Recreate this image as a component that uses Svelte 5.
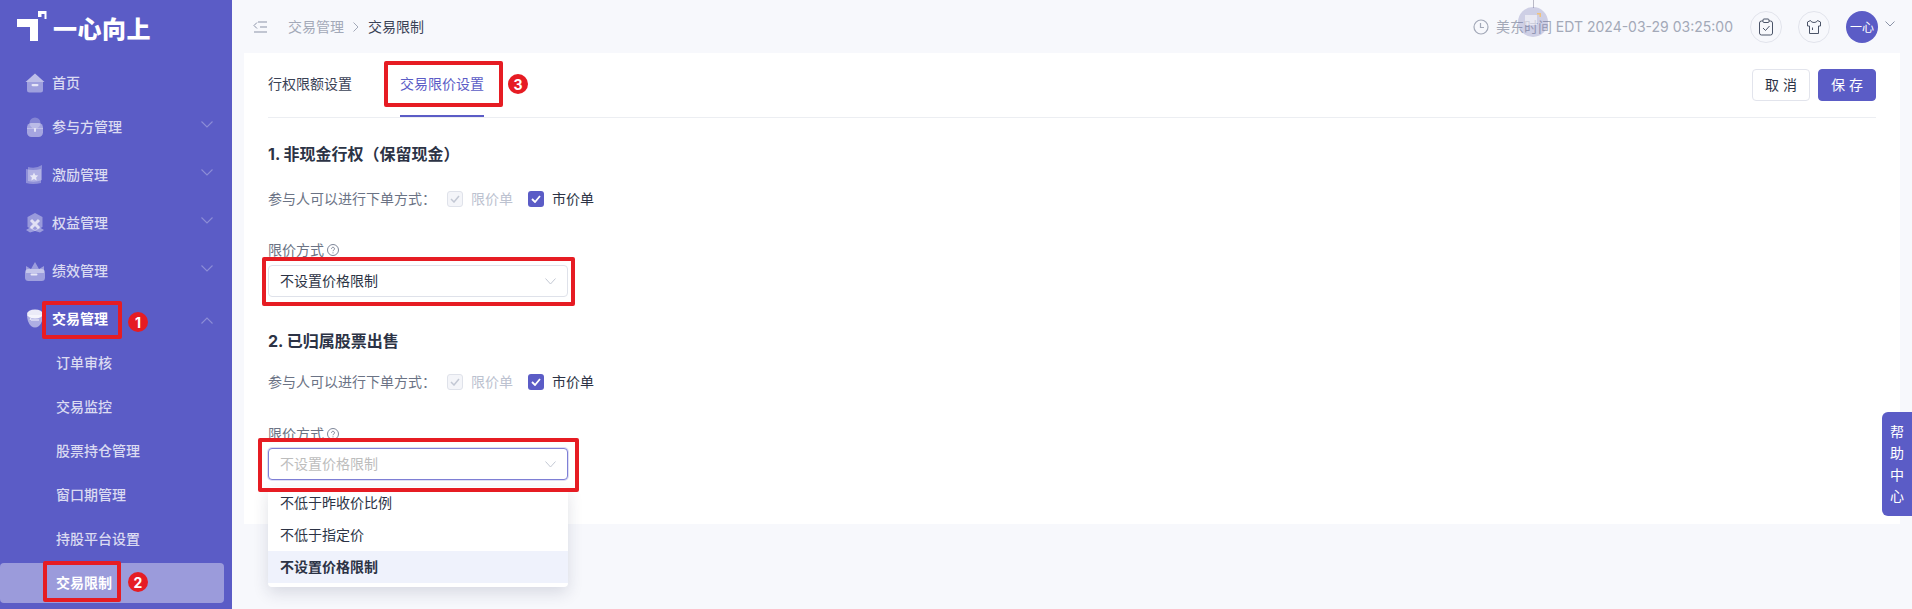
<script>
const menu = [
    { label: '首页', icon: 'home' },
    { label: '参与方管理', icon: 'bag', arrow: true },
    { label: '激励管理', icon: 'flag', arrow: true },
    { label: '权益管理', icon: 'shield', arrow: true },
    { label: '绩效管理', icon: 'crown', arrow: true },
    { label: '交易管理', icon: 'cup', arrow: true, open: true }
];
const subs = ['订单审核', '交易监控', '股票持仓管理', '窗口期管理', '持股平台设置', '交易限制'];
const sections = [
    { title: '1. 非现金行权（保留现金）', focus: false },
    { title: '2. 已归属股票出售', focus: true }
];
const options = ['不低于昨收价比例', '不低于指定价', '不设置价格限制'];
const boxes = [
    { x: 42, y: 301, w: 80, h: 38 },
    { x: 43, y: 561, w: 78, h: 41 },
    { x: 384, y: 61, w: 119, h: 46 },
    { x: 262, y: 257, w: 313, h: 49 },
    { x: 258, y: 438, w: 321, h: 54 }
];
const badges = [
    { n: 1, x: 138, y: 322 },
    { n: 2, x: 138, y: 582 },
    { n: 3, x: 518, y: 84 }
];
</script>

<div class="layout">
    <aside class="sidebar">
        <div class="logo">
            <svg width="31" height="32" viewBox="0 0 31 32">
                <path d="M1 9h21v22h-8V17H1z" fill="#fff"/>
                <path d="M22 1h8.500v8h-2V4h-3v3h-3.500z" fill="#fff"/>
            </svg>
            <span class="logo-text">一心向上</span>
        </div>
        <nav class="menu">
            {#each menu as item}
                <div class="item" class:open={item.open}>
                    <svg class="icon" width="20" height="20" viewBox="0 0 20 20">
                        {#if item.icon === 'home'}
                            <path d="M10 .5l9.500 8.500H.5z" fill="#fff" fill-opacity=".6"/>
                            <path d="M2 9h16v8a2.500 2.500 0 0 1-2.500 2.500h-11A2.500 2.500 0 0 1 2 17z" fill="#fff" fill-opacity=".42"/>
                            <rect x="6.500" y="11" width="7" height="2.200" rx="1.100" fill="#fff" fill-opacity=".75"/>
                        {:else if item.icon === 'bag'}
                            <circle cx="10" cy="6" r="5.500" fill="#fff" fill-opacity=".25"/>
                            <rect x="2" y="6" width="16" height="14" rx="4.500" fill="#fff" fill-opacity=".45"/>
                            <path d="M2 11.500h16" stroke="#fff" stroke-opacity=".3"/>
                            <rect x="9" y="11" width="2" height="4" rx="1" fill="#fff" fill-opacity=".7"/>
                        {:else if item.icon === 'flag'}
                            <path d="M3 2q8 2 14-2v15q-7 3-14 1z" fill="#fff" fill-opacity=".3"/>
                            <path d="M1 4q7 2 15 0v14q-8 2-15 0z" fill="#fff" fill-opacity=".32"/>
                            <path d="M9 7.500l1.300 2.800 3 .3-2.200 2 .6 2.900L9 14l-2.700 1.500.6-2.900-2.200-2 3-.3z" fill="#fff" fill-opacity=".7"/>
                        {:else if item.icon === 'shield'}
                            <path d="M10 0l7.500 4v10L10 18l-7.500-4V4z" fill="#fff" fill-opacity=".38"/>
                            <path d="M6 7l8 8M14 7l-8 8" stroke="#fff" stroke-opacity=".7" stroke-width="3"/>
                            <path d="M1 17l5-3 4 3 4-3 5 3-4 2.500-5-1.500-5 1.500z" fill="#fff" fill-opacity=".4"/>
                        {:else if item.icon === 'crown'}
                            <path d="M1 5l5 3 4-7 4 7 5-3v7H1z" fill="#fff" fill-opacity=".4"/>
                            <rect x="0" y="8" width="20" height="12" rx="3.500" fill="#fff" fill-opacity=".42"/>
                            <rect x="5.500" y="12.500" width="7" height="2" rx="1" fill="#fff" fill-opacity=".75"/>
                        {:else}
                            <path d="M2 6q0 7 4 11 4 3 8 0 4-4 4-11z" fill="#fff" fill-opacity=".5"/>
                            <ellipse cx="10" cy="5" rx="8" ry="4.500" fill="#fff" fill-opacity=".88"/>
                            <path d="M6 11h8M6 9l-1 2" stroke="#fff" stroke-opacity=".9"/>
                        {/if}
                    </svg>
                    <span>{item.label}</span>
                    {#if item.arrow}
                        <svg class="arrow" width="12" height="7" viewBox="0 0 12 7">
                            <path d={item.open ? 'M.5 6.500L6 1l5.500 5.500' : 'M.5.5L6 6l5.500-5.500'} fill="none" stroke="#fff" stroke-opacity=".3" stroke-width="1.100"/>
                        </svg>
                    {/if}
                </div>
            {/each}
            {#each subs as sub, i}
                <div class="sub" class:active={i === subs.length - 1}>{sub}</div>
            {/each}
        </nav>
    </aside>

    <main class="main">
        <header class="topbar">
            <svg class="collapse" width="15" height="12" viewBox="0 0 15 12">
                <path d="M5 1h9M7 6h7M1 11h13M4 1.500L1 4.500l3 3" fill="none" stroke="#8b93a7" stroke-width="1"/>
            </svg>
            <span class="crumb">交易管理</span>
            <svg class="crumb-sep" width="6" height="10" viewBox="0 0 6 10">
                <path d="M.5.5L5 5 .5 9.500" fill="none" stroke="#a3a9b8" stroke-width="1"/>
            </svg>
            <span class="crumb current">交易限制</span>

            <div class="top-right">
                <svg width="16" height="16" viewBox="0 0 16 16">
                    <circle cx="8" cy="8" r="7" fill="none" stroke="#a3a9b8" stroke-width="1.200"/>
                    <path d="M7.500 4v4.500H11" fill="none" stroke="#a3a9b8" stroke-width="1.200"/>
                </svg>
                <span class="time">美东时间 EDT 2024-03-29 03:25:00</span>
                <button class="round first">
                    <svg width="16" height="18" viewBox="0 0 16 18">
                        <rect x="1.500" y="3" width="13" height="14" rx="2" fill="none" stroke="#4b5468"/>
                        <rect x="5" y="1" width="6" height="3.500" rx="1" fill="#f7f8fc" stroke="#4b5468"/>
                        <path d="M5 10l2.500 2.500L11.500 8" fill="none" stroke="#4b5468"/>
                    </svg>
                </button>
                <button class="round">
                    <svg width="16" height="16" viewBox="0 0 16 16">
                        <path d="M4.500 1.500L1.500 3v4h2v7.500h9V7h2V3l-3-1.500q-.5 2-3.500 2t-3.500-2z" fill="none" stroke="#4b5468"/>
                        <path d="M6.500 8.500v2.500" stroke="#4b5468"/>
                    </svg>
                </button>
                <span class="avatar">一心</span>
                <svg class="avatar-arrow" width="10" height="6" viewBox="0 0 10 6">
                    <path d="M.5.5L5 5 9.500.5" fill="none" stroke="#8b93a7" stroke-width="1"/>
                </svg>
            </div>
        </header>

        <section class="card">
            <div class="tabs">
                <span class="tab">行权限额设置</span>
                <span class="tab selected">交易限价设置</span>
                <div class="actions">
                    <button class="btn">取 消</button>
                    <button class="btn primary">保 存</button>
                </div>
            </div>

            {#each sections as section}
                <div class="section" class:focus={section.focus}>
                    <h3>{section.title}</h3>
                    <div class="order-row">
                        <span class="order-label">参与人可以进行下单方式：</span>
                        <span class="check disabled">
                            <svg width="10" height="8" viewBox="0 0 10 8"><path d="M1 4l3 3 5-6" fill="none" stroke="#c3c8d4" stroke-width="1.500"/></svg>
                        </span>
                        <span class="check-text muted">限价单</span>
                        <span class="check on">
                            <svg width="10" height="8" viewBox="0 0 10 8"><path d="M1 4l3 3 5-6" fill="none" stroke="#fff" stroke-width="1.800"/></svg>
                        </span>
                        <span class="check-text">市价单</span>
                    </div>
                    <div class="field-label">
                        <span>限价方式</span>
                        <svg width="12" height="12" viewBox="0 0 12 12">
                            <circle cx="6" cy="6" r="5.500" fill="none" stroke="#7d8598" stroke-width="1"/>
                            <path d="M4.500 4.700a1.500 1.500 0 1 1 2.200 1.400c-.5.300-.7.600-.7 1.100" fill="none" stroke="#7d8598" stroke-width="1"/>
                            <circle cx="6" cy="8.800" r=".6" fill="#7d8598"/>
                        </svg>
                    </div>
                    <div class="select" class:focused={section.focus}>
                        <span class="select-text">不设置价格限制</span>
                        <svg width="11" height="7" viewBox="0 0 11 7">
                            <path d="M.5.5L5.500 6l5-5.500" fill="none" stroke="#c3c8d4" stroke-width="1"/>
                        </svg>
                        {#if section.focus}
                            <ul class="dropdown">
                                {#each options as opt, i}
                                    <li class:picked={i === options.length - 1}>{opt}</li>
                                {/each}
                            </ul>
                        {/if}
                    </div>
                </div>
            {/each}
        </section>
    </main>

    <div class="help">帮助中心</div>

    <div class="drag-ghost">
        <span class="drag-line"></span>
        <span class="drag-dot"></span>
        <svg class="drag-icon" width="16" height="12" viewBox="0 0 16 12">
            <rect x="0" y="2" width="12" height="10" fill="#fff" fill-opacity=".55"/>
            <path d="M12 0h4v4h-1.500V1.500H12z" fill="#f1c27a"/>
        </svg>
    </div>

    {#each boxes as b}
        <div class="mark" style="left:{b.x}px;top:{b.y}px;width:{b.w}px;height:{b.h}px"></div>
    {/each}
    {#each badges as b}
        <span class="badge" style="left:{b.x - 10}px;top:{b.y - 10}px">{b.n}</span>
    {/each}
</div>

<style>
:global(body) {
    margin: 0;
    background: #f7f8fc;
    font-family: Inter, "Noto Sans CJK SC", sans-serif;
}

.layout {
    position: relative;
    display: flex;
    width: 1912px;
    height: 609px;
    overflow: hidden;
    background: #f7f8fc;
}

.sidebar {
    flex: none;
    width: 232px;
    height: 609px;
    background: #5b5cc6;
    overflow: hidden;
}

.logo {
    display: flex;
    align-items: flex-start;
    height: 63px;
    padding: 10px 0 0 16px;
    box-sizing: border-box;
    gap: 6px;
}

.logo-text {
    margin-top: 5px;
    color: #fff;
    font-size: 24px;
    line-height: 30px;
    font-weight: 900;
    letter-spacing: .5px;
}

.menu {
    display: flex;
    flex-direction: column;
}

.item {
    position: relative;
    display: flex;
    align-items: center;
    flex: none;
    height: 40px;
    margin-bottom: 8px;
    padding: 0 0 0 25px;
    color: rgba(255, 255, 255, 0.78);
    font-size: 14px;
    font-weight: 500;
}

.item > span {
    padding-bottom: 2px;
}

.item:first-child {
    margin-bottom: 4px;
}

.item.open {
    margin-bottom: 4px;
    color: #fff;
    font-weight: 700;
}

.icon {
    margin-right: 7px;
}

.arrow {
    position: absolute;
    left: 201px;
    top: 14px;
}

.item.open .arrow {
    top: 18px;
}

.sub {
    flex: none;
    display: flex;
    align-items: center;
    height: 40px;
    margin-bottom: 4px;
    padding: 0 0 2px 56px;
    box-sizing: border-box;
    color: rgba(255, 255, 255, 0.78);
    font-size: 14px;
    font-weight: 500;
}

.sub.active {
    width: 224px;
    border-radius: 4px;
    background: #9b9bdb;
    color: #fff;
    font-weight: 700;
}

.main {
    flex: 1;
    min-width: 0;
}

.topbar {
    display: flex;
    align-items: center;
    height: 53px;
    padding: 0 17px 0 21px;
    box-sizing: border-box;
}

.collapse {
    margin-right: 20px;
}

.crumb {
    padding-bottom: 2px;
    color: #a3a9b8;
    font-size: 14px;
}

.crumb.current {
    color: #3a4256;
}

.crumb-sep {
    margin: 0 9px;
}

.top-right {
    display: flex;
    align-items: center;
    margin-left: auto;
}

.time {
    margin-left: 7px;
    padding-bottom: 1px;
    color: #a3a9b8;
    font-size: 14px;
}

.round {
    display: flex;
    align-items: center;
    justify-content: center;
    width: 32px;
    height: 32px;
    margin-right: 16px;
    padding: 0;
    border: 1px solid #e2e4ec;
    border-radius: 50%;
    background: transparent;
}

.round.first {
    margin-left: 17px;
}

.avatar {
    display: flex;
    align-items: center;
    justify-content: center;
    width: 32px;
    height: 32px;
    border-radius: 50%;
    background: #5b5cc6;
    color: #fff;
    font-size: 12px;
}

.avatar-arrow {
    margin: -6px 0 0 7px;
}

.card {
    width: 1656px;
    height: 471px;
    margin-left: 12px;
    padding: 0 24px;
    box-sizing: border-box;
    background: #fff;
}

.tabs {
    display: flex;
    align-items: center;
    height: 65px;
    border-bottom: 1px solid #eceef2;
    box-sizing: border-box;
    gap: 48px;
}

.tab {
    display: flex;
    align-items: center;
    height: 64px;
    padding-bottom: 4px;
    box-sizing: border-box;
    color: #3a4256;
    font-size: 14px;
}

.tab.selected {
    padding-bottom: 2px;
    border-bottom: 2px solid #5b5cc6;
    color: #5b5cc6;
}

.actions {
    display: flex;
    margin-left: auto;
    gap: 8px;
}

.btn {
    width: 58px;
    height: 32px;
    padding: 0 0 2px;
    border: 1px solid #e2e4ec;
    border-radius: 4px;
    background: #fff;
    color: #2c3345;
    font-family: inherit;
    font-size: 14px;
}

.btn.primary {
    border-color: #5b5cc6;
    background: #5b5cc6;
    color: #fff;
}

.section h3 {
    margin: 25px 0 0;
    color: #2c3345;
    font-size: 16px;
    line-height: 22px;
    font-weight: 700;
}

.section + .section h3 {
    margin-top: 33px;
}

.order-row {
    display: flex;
    align-items: center;
    height: 20px;
    margin-top: 24px;
    font-size: 14px;
}

.section + .section .order-row {
    margin-top: 20px;
}

.order-label {
    width: 179px;
    padding-bottom: 2px;
    color: #6b7385;
}

.check {
    display: flex;
    align-items: center;
    justify-content: center;
    width: 16px;
    height: 16px;
    box-sizing: border-box;
    border-radius: 3px;
}

.check.disabled {
    border: 1px solid #dfe2ea;
    background: #f4f5f9;
}

.check.on {
    background: #5b5cc6;
}

.check-text {
    margin: 0 15px 0 8px;
    padding-bottom: 2px;
    color: #2c3345;
}

.check-text.muted {
    color: #bcc2d0;
}

.field-label {
    display: flex;
    align-items: center;
    gap: 3px;
    height: 20px;
    margin-top: 31px;
    color: #6b7385;
    font-size: 14px;
}

.field-label span {
    padding-bottom: 2px;
}

.section.focus .field-label {
    margin-top: 32px;
}

.select {
    position: relative;
    display: flex;
    align-items: center;
    justify-content: space-between;
    width: 300px;
    height: 32px;
    margin-top: 5px;
    padding: 0 11px 0 11px;
    box-sizing: border-box;
    border: 1px solid #dfe2ea;
    border-radius: 4px;
    background: #fff;
    color: #2c3345;
    font-size: 14px;
}

.select-text {
    padding-bottom: 2px;
}

.select.focused {
    margin-top: 4px;
    border-color: #7f80d6;
    box-shadow: 0 0 0 1px rgba(91, 92, 198, 0.2);
    color: #bdbdbd;
}

.dropdown {
    position: absolute;
    left: -1px;
    top: 38px;
    width: 300px;
    margin: 0;
    padding: 0 0 4px;
    border-radius: 4px;
    background: #fff;
    box-shadow: 0 6px 16px rgba(30, 36, 70, 0.14);
    list-style: none;
    color: #2c3345;
}

.dropdown li {
    display: flex;
    align-items: center;
    height: 32px;
    padding: 0 12px 2px;
    box-sizing: border-box;
}

.dropdown li.picked {
    background: #eff2fc;
    font-weight: 600;
}

.help {
    position: absolute;
    right: 0;
    top: 412px;
    width: 30px;
    height: 104px;
    padding: 9px 8px 0;
    box-sizing: border-box;
    border-radius: 6px 0 0 6px;
    background: #5b5cc6;
    color: #fff;
    font-size: 14px;
    line-height: 21.300px;
    text-align: center;
}

.drag-ghost {
    position: absolute;
    left: 1518px;
    top: 0;
    width: 30px;
    height: 37px;
}

.drag-line {
    position: absolute;
    left: 15px;
    top: 0;
    width: 1px;
    height: 8px;
    background: #b9b9c6;
}

.drag-dot {
    position: absolute;
    left: 0;
    top: 7px;
    width: 30px;
    height: 30px;
    border-radius: 50%;
    background: rgba(100, 100, 170, 0.28);
}

.drag-icon {
    position: absolute;
    left: 7px;
    top: 13px;
}

.mark {
    position: absolute;
    box-sizing: border-box;
    border: 4px solid #e61c23;
    border-radius: 2px;
}

.badge {
    position: absolute;
    display: flex;
    align-items: center;
    justify-content: center;
    width: 20px;
    height: 20px;
    border-radius: 50%;
    background: #e61c23;
    color: #fff;
    font-size: 14px;
    font-weight: 700;
}
</style>
